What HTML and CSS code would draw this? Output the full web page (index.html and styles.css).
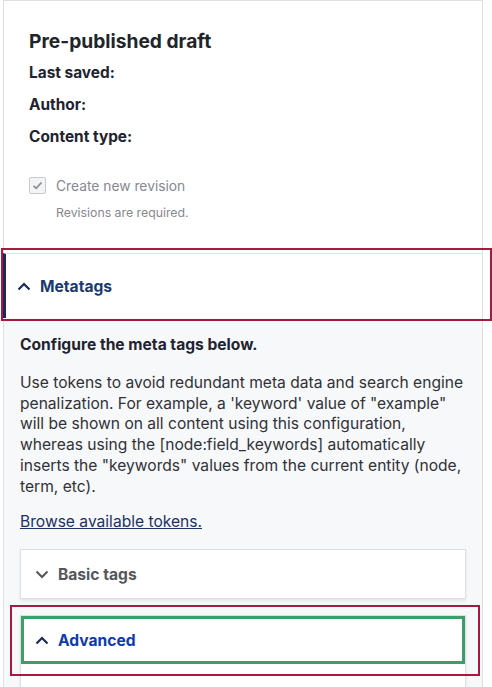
FILE: index.html
```html
<!DOCTYPE html>
<html>
<head>
<meta charset="utf-8">
<link rel="stylesheet" href="styles.css">
</head>
<body>
<div class="panel">
  <div class="meta">
    <h2 class="title">Pre-published draft</h2>
    <div class="row">Last saved:</div>
    <div class="row">Author:</div>
    <div class="row">Content type:</div>
    <div class="check">
      <span class="box"><svg width="13" height="13" viewBox="0 0 13 13"><path d="M2.5 6.8 L5.2 9.3 L10.5 3.5" fill="none" stroke="#8b8d93" stroke-width="1.8"/></svg></span>
      <span class="check-label">Create new revision</span>
    </div>
    <div class="hint">Revisions are required.</div>
  </div>
  <div class="section">
    <div class="summary open focus-red">
      <svg class="chev" width="14" height="9" viewBox="0 0 14 9"><path d="M1.5 7.5 L7 2 L12.5 7.5" fill="none" stroke="#1b2b55" stroke-width="2.2"/></svg>
      <span class="sum-title">Metatags</span>
    </div>
    <div class="body">
      <p class="lead">Configure the meta tags below.</p>
      <p class="text">Use tokens to avoid redundant meta data and search engine penalization. For example, a 'keyword' value of "example" will be shown on all content using this configuration, whereas using the [node:field_keywords] automatically inserts the "keywords" values from the current entity (node, term, etc).</p>
      <p class="link"><a href="#">Browse available tokens.</a></p>
      <div class="card">
        <div class="card-sum">
          <svg class="chev" width="14" height="9" viewBox="0 0 14 9"><path d="M1.5 1.5 L7 7 L12.5 1.5" fill="none" stroke="#55565b" stroke-width="2"/></svg>
          <span class="card-title">Basic tags</span>
        </div>
      </div>
      <div class="card open-card">
        <div class="card-sum active">
          <svg class="chev" width="14" height="9" viewBox="0 0 14 9"><path d="M1.5 7.5 L7 2 L12.5 7.5" fill="none" stroke="#1b2b55" stroke-width="2.2"/></svg>
          <span class="card-title blue">Advanced</span>
        </div>
        <div class="card-body"></div>
      </div>
    </div>
  </div>
</div>
</body>
</html>
```
FILE: styles.css
```css
html, body {
  margin: 0;
  padding: 0;
  background: #ffffff;
  font-family: Inter, "Noto Sans", sans-serif;
  color: #222330;
}
body {
  height: 687px;
  overflow: hidden;
}
.panel {
  margin-left: 3px;
  width: 478px;
  border: 1px solid #dedfe3;
  border-bottom: none;
  height: 686px;
  background: #f7f8fa;
}
.meta {
  background: #fff;
  padding: 28px 25px 33px;
}
.title {
  margin: 0 0 10px;
  font-size: 19.2px;
  line-height: 24px;
  font-weight: 700;
  color: #232429;
}
.row {
  font-size: 15.4px;
  line-height: 20px;
  font-weight: 700;
  margin-bottom: 12px;
  color: #222330;
}
.check {
  display: flex;
  align-items: center;
  margin-top: 30px;
}
.box {
  width: 15px;
  height: 15px;
  border: 1px solid #c9cacf;
  border-radius: 2px;
  background: #f3f4f6;
  display: flex;
  align-items: center;
  justify-content: center;
  margin-right: 10px;
}
.check-label {
  font-size: 13.8px;
  color: #86888f;
}
.hint {
  margin: 11px 0 0 27px;
  font-size: 12.3px;
  color: #86888f;
}
.summary {
  position: relative;
  height: 64px;
  background: #fff;
  border-top: 1px solid #dfe8ea;
  border-left: 3px solid #1a2a5a;
  margin-left: -1px;
  display: flex;
  align-items: center;
  padding-left: 11px;
}
.focus-red::after {
  content: "";
  position: absolute;
  left: -5px;
  right: -10px;
  top: -6px;
  bottom: -3px;
  border: 2px solid #a8193f;
}
.chev {
  margin-right: 9px;
  flex: none;
}
.sum-title {
  font-size: 15.6px;
  font-weight: 700;
  color: #1a3a72;
}
.body {
  padding: 17px 16px 0;
}
.lead {
  margin: 0 0 18px;
  font-size: 15.6px;
  line-height: 20px;
  font-weight: 700;
  color: #222330;
}
.text {
  margin: 0 0 15px;
  font-size: 15.6px;
  line-height: 20.7px;
  color: #303238;
}
.link {
  margin: 0 0 17px;
  font-size: 15.6px;
  line-height: 20px;
}
.link a {
  color: #1a3266;
}
.card {
  background: #fff;
  border: 1px solid #dedfe3;
  box-shadow: 0 2px 3px rgba(0,0,0,0.08);
  margin-bottom: 16px;
}
.card-sum {
  position: relative;
  height: 48px;
  display: flex;
  align-items: center;
  padding-left: 14px;
}
.card-title {
  font-size: 15.6px;
  font-weight: 700;
  color: #55565b;
}
.card-title.blue {
  color: #0c3bb0;
}
.active {
  outline: 3px solid #3b9f6a;
  outline-offset: -3px;
}
.active::after {
  content: "";
  position: absolute;
  left: -11px;
  right: -15px;
  top: -11px;
  bottom: -12px;
  border: 2px solid #a8193f;
}
.card-body {
  height: 30px;
}
```
